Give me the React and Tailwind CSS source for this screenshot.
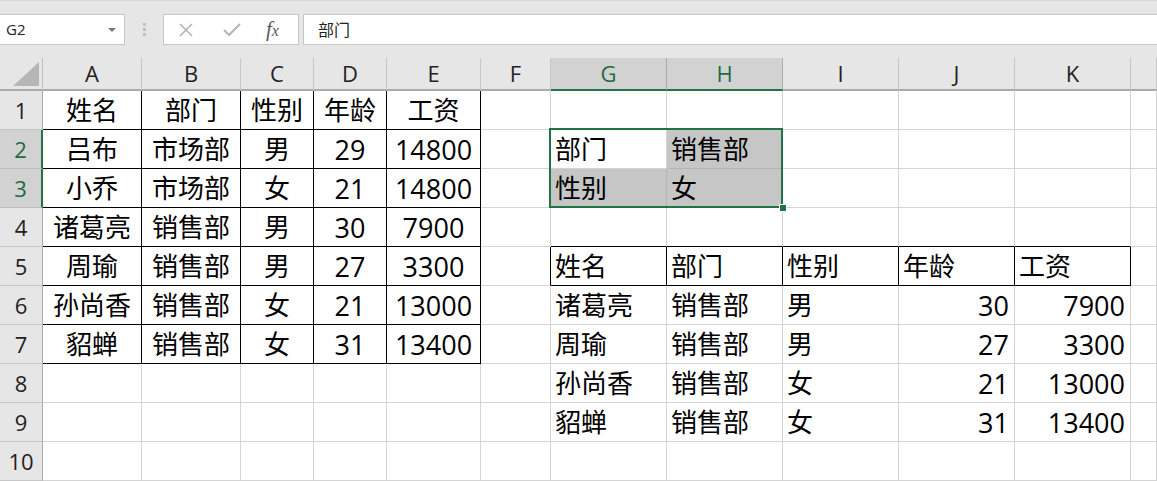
import React from 'react';

const COLS = ['A', 'B', 'C', 'D', 'E', 'F', 'G', 'H', 'I', 'J', 'K', ''];

const LEFT = [
  ['姓名', '部门', '性别', '年龄', '工资'],
  ['吕布', '市场部', '男', '29', '14800'],
  ['小乔', '市场部', '女', '21', '14800'],
  ['诸葛亮', '销售部', '男', '30', '7900'],
  ['周瑜', '销售部', '男', '27', '3300'],
  ['孙尚香', '销售部', '女', '21', '13000'],
  ['貂蝉', '销售部', '女', '31', '13400'],
];

const RIGHT_HEAD = ['姓名', '部门', '性别', '年龄', '工资'];
const RIGHT = [
  ['诸葛亮', '销售部', '男', '30', '7900'],
  ['周瑜', '销售部', '男', '27', '3300'],
  ['孙尚香', '销售部', '女', '21', '13000'],
  ['貂蝉', '销售部', '女', '31', '13400'],
];

const BASE =
  'relative flex items-center border-r border-b whitespace-nowrap text-[26px] leading-none text-black';

function cellInfo(r, c) {
  if (r >= 1 && r <= 7 && c <= 4) {
    return { text: LEFT[r - 1][c], cls: 'justify-center border-black bg-white' };
  }
  if (r === 2 && c === 6) return { text: '部门', cls: 'justify-start pl-[4px] border-[#d4d4d4] bg-white', sel: true };
  if (r === 2 && c === 7) return { text: '销售部', cls: 'justify-start pl-[4px] border-[#b4b4b4] bg-[#c6c6c6]' };
  if (r === 3 && c === 6) return { text: '性别', cls: 'justify-start pl-[4px] border-[#b4b4b4] bg-[#c6c6c6]' };
  if (r === 3 && c === 7) return { text: '女', cls: 'justify-start pl-[4px] border-[#b4b4b4] bg-[#c6c6c6]' };
  if (r === 4 && c >= 6 && c <= 10) return { text: '', cls: 'border-[#d4d4d4] border-b-black bg-white' };
  if (r === 5 && c === 5) return { text: '', cls: 'border-[#d4d4d4] border-r-black bg-white' };
  if (r === 5 && c >= 6 && c <= 10) return { text: RIGHT_HEAD[c - 6], cls: 'justify-start pl-[4px] border-black bg-white' };
  if (r >= 6 && r <= 9 && c >= 6 && c <= 8) return { text: RIGHT[r - 6][c - 6], cls: 'justify-start pl-[4px] border-[#d4d4d4] bg-white' };
  if (r >= 6 && r <= 9 && c >= 9 && c <= 10) return { text: RIGHT[r - 6][c - 6], cls: 'justify-end pr-[5px] border-[#d4d4d4] bg-white' };
  return { text: '', cls: 'border-[#d4d4d4] bg-white' };
}

function CellText({ text }) {
  if (/^\d+$/.test(text)) {
    return <span className="text-[27px] leading-none">{text}</span>;
  }
  return <>{text}</>;
}

function FormulaBar() {
  return (
    <div className="h-[58px] bg-[#e6e6e6] flex flex-col border-t border-[#d8d8d8]">
      <div className="h-[13px]" />
      <div className="h-[31px] flex items-stretch">
        <div className="w-[125px] bg-white border border-l-0 border-[#c6c6c6] flex items-center justify-between pl-[6px] pr-[8px]">
          <span className="text-[15px] text-[#222] font-['Open_Sans',sans-serif]">G2</span>
          <span className="w-0 h-0 border-l-[4px] border-r-[4px] border-t-[4px] border-l-transparent border-r-transparent border-t-[#777]" />
        </div>
        <div className="w-[38px] flex flex-col items-center justify-center gap-[2px]">
          <span className="w-[3px] h-[3px] bg-[#c0c0c0]" />
          <span className="w-[3px] h-[3px] bg-[#c0c0c0]" />
          <span className="w-[3px] h-[3px] bg-[#c0c0c0]" />
        </div>
        <div className="w-[136px] bg-white border border-[#c6c6c6] flex items-center">
          <svg width="16" height="16" viewBox="0 0 16 16" className="ml-[14px]">
            <path d="M2 2 L14 14 M14 2 L2 14" stroke="#b4b4b4" strokeWidth="1.6" />
          </svg>
          <svg width="20" height="16" viewBox="0 0 20 16" className="ml-[28px]">
            <path d="M2 8 L7 13 L18 2" stroke="#b4b4b4" strokeWidth="2" fill="none" />
          </svg>
          <span className="ml-[24px] italic text-[21px] text-[#5a5a5a] font-['Liberation_Serif',serif] leading-none">
            f<span className="text-[16px]">x</span>
          </span>
        </div>
        <div className="w-[4px]" />
        <div className="flex-1 bg-white border border-r-0 border-[#c6c6c6] flex items-center pl-[14px]">
          <span className="text-[16px] text-[#222] font-['Open_Sans','Noto_Sans_CJK_SC',sans-serif]">部门</span>
        </div>
      </div>
      <div className="flex-1" />
    </div>
  );
}

export default function App() {
  const rows = [];
  rows.push(
    <div key="corner" className="relative bg-[#e6e6e6] border-r border-b-2 border-r-[#c0c0c0] border-b-[#ababab]">
      <svg className="absolute right-[3px] bottom-[3px]" width="26" height="24" viewBox="0 0 26 24">
        <polygon points="26,0 26,24 0,24" fill="#b6b6b6" />
      </svg>
    </div>
  );
  COLS.forEach((l, c) => {
    const sel = c === 6 || c === 7;
    rows.push(
      <div
        key={'h' + c}
        className={
          sel
            ? "flex items-center justify-center bg-[#d2d2d2] border-r border-r-[#ababab] border-b-2 border-b-[#217346] text-[22px] text-[#1e6b40] font-['Open_Sans',sans-serif]"
            : "flex items-center justify-center bg-[#e6e6e6] border-r border-r-[#c6c6c6] border-b-2 border-b-[#ababab] text-[22px] text-[#222] font-['Open_Sans',sans-serif]"
        }
      >
        {l}
      </div>
    );
  });
  for (let r = 1; r <= 10; r++) {
    const sel = r === 2 || r === 3;
    rows.push(
      <div
        key={'r' + r}
        className={
          sel
            ? "flex items-center justify-center bg-[#d2d2d2] border-r-2 border-r-[#217346] border-b border-b-[#bdbdbd] text-[22px] text-[#1e6b40] font-['Open_Sans',sans-serif]"
            : "flex items-center justify-center bg-[#e6e6e6] border-r border-r-[#ababab] border-b border-b-[#c6c6c6] text-[22px] text-[#222] font-['Open_Sans',sans-serif]"
        }
      >
        {r}
      </div>
    );
    COLS.forEach((l, c) => {
      const info = cellInfo(r, c);
      rows.push(
        <div key={r + '-' + c} className={BASE + ' ' + info.cls}>
          <CellText text={info.text} />
          {info.sel && (
            <div className="absolute left-[-2px] top-[-2px] w-[234px] h-[80px] border-2 border-[#217346] pointer-events-none z-10">
              <div className="absolute right-[-6px] bottom-[-6px] w-[8px] h-[8px] bg-[#217346] border border-white" />
            </div>
          )}
        </div>
      );
    });
  }

  return (
    <div className="w-[1157px] h-[481px] overflow-hidden bg-white font-['Open_Sans','Noto_Sans_CJK_SC',sans-serif]">
      <FormulaBar />
      <div className="grid grid-cols-[43px_99px_99px_73px_73px_94px_70px_116px_116px_116px_116px_116px_26px] grid-rows-[33px_repeat(10,39px)]">
        {rows}
      </div>
    </div>
  );
}
